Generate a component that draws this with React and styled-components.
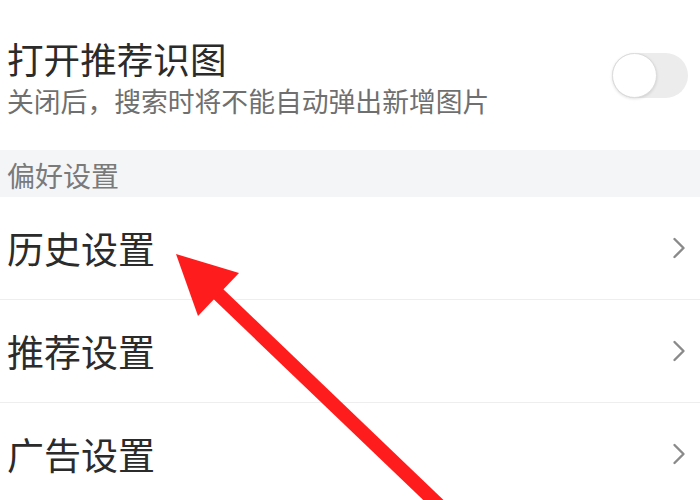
import React from "react";
import styled, { createGlobalStyle } from "styled-components";

const Global = createGlobalStyle`
  html, body { margin: 0; padding: 0; background: #ffffff; }
  body { font-family: "Noto Sans CJK SC", "Noto Sans", sans-serif; }
  * { box-sizing: border-box; }
`;

const Page = styled.div`
  position: relative;
  width: 700px;
  height: 500px;
  overflow: hidden;
  background: #ffffff;
`;

const ToggleRow = styled.div`
  display: flex;
  align-items: center;
  justify-content: space-between;
  height: 150px;
  padding: 0 12px 0 7px;
`;

const TextBlock = styled.div`
  display: flex;
  flex-direction: column;
  gap: 4px;
  padding-top: 3px;
`;

const Title = styled.div`
  font-size: 36.6px;
  line-height: 44px;
  color: #2b2b2b;
`;

const Subtitle = styled.div`
  font-size: 26.8px;
  line-height: 32px;
  color: #6f6f6f;
  white-space: nowrap;
`;

const Track = styled.div`
  position: relative;
  width: 76px;
  height: 45px;
  border-radius: 23px;
  background: #ececec;
`;

const Knob = styled.div`
  position: absolute;
  left: 0;
  top: 0;
  width: 45px;
  height: 45px;
  border-radius: 50%;
  background: #ffffff;
  border: 1px solid #dcdcdc;
  box-shadow: 0 1px 3px rgba(0, 0, 0, 0.12);
`;

const SectionHeader = styled.div`
  height: 47px;
  padding: 4px 7px 0;
  background: #f4f5f7;
  font-size: 28px;
  line-height: 43px;
  color: #7a7a7a;
`;

const Row = styled.div`
  display: flex;
  align-items: center;
  justify-content: space-between;
  height: 103px;
  padding: 0 14px 0 7px;
  border-bottom: 1px solid #eeeeee;
`;

const RowLabel = styled.div`
  font-size: 37px;
  line-height: 48px;
  color: #2b2b2b;
`;

const Chevron = styled.svg`
  width: 14px;
  height: 24px;
  display: block;
`;

const Overlay = styled.svg`
  position: absolute;
  left: 0;
  top: 0;
  width: 700px;
  height: 500px;
  pointer-events: none;
`;

const ChevronIcon = () => (
  <Chevron viewBox="0 0 14 24">
    <path d="M2.5 3 L11.5 12 L2.5 21" fill="none" stroke="#8a8a8a" strokeWidth="2.4" strokeLinecap="round" strokeLinejoin="round" />
  </Chevron>
);

const items = ["历史设置", "推荐设置", "广告设置"];

export default function App() {
  return (
    <Page>
      <Global />
      <ToggleRow>
        <TextBlock>
          <Title>打开推荐识图</Title>
          <Subtitle>关闭后，搜索时将不能自动弹出新增图片</Subtitle>
        </TextBlock>
        <Track>
          <Knob />
        </Track>
      </ToggleRow>
      <SectionHeader>偏好设置</SectionHeader>
      {items.map((t) => (
        <Row key={t}>
          <RowLabel>{t}</RowLabel>
          <ChevronIcon />
        </Row>
      ))}
      <Overlay viewBox="0 0 700 500">
        <line x1="212" y1="288" x2="448" y2="514" stroke="#ff1c1c" strokeWidth="14" />
        <polygon points="176,254 239,273 198,316" fill="#ff1c1c" />
      </Overlay>
    </Page>
  );
}
